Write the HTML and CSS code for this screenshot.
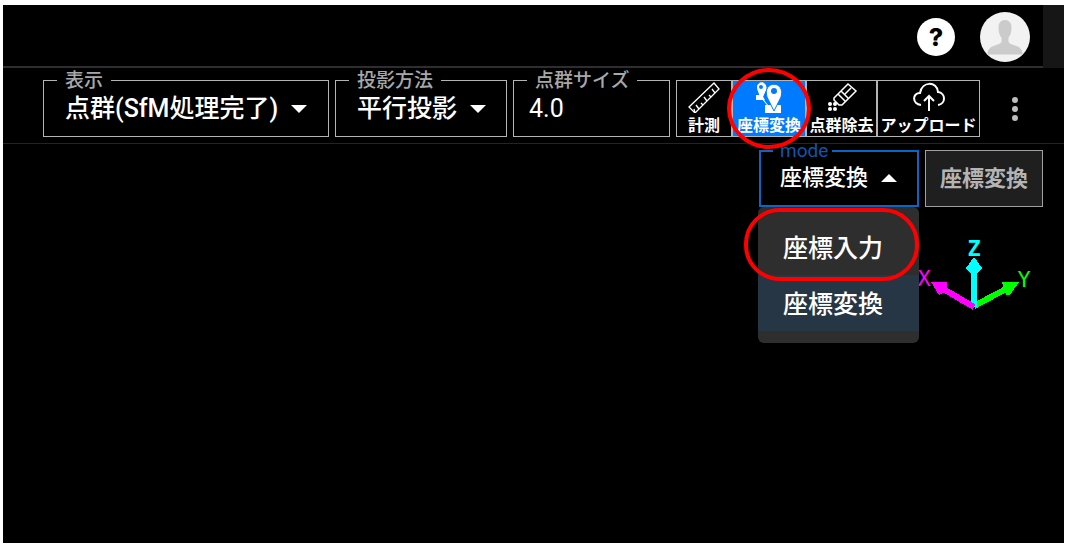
FILE: index.html
```html
<!DOCTYPE html>
<html lang="ja">
<head>
  <meta charset="UTF-8" />
  <meta name="viewport" content="width=device-width, initial-scale=1.0" />
  <title>座標変換</title>
  <link rel="stylesheet" href="styles.css">
</head>
<body>
  <div class="app">
    <header class="header">
      <button class="help" type="button">?</button>
      <button class="avatar" type="button" aria-label="アカウント">
        <svg viewBox="0 0 50 50" width="50" height="50">
          <circle cx="25" cy="25" r="25" fill="#f2f2f2" />
          <path d="M25 8c-4 0-6.500 3-6.500 7 0 6 1.500 9 3 10.500v4c0 2-4 3-8 4.500-4 1.500-6 4-6 8.500h35c0-4.500-2-7-6-8.500-4-1.500-8-2.500-8-4.500v-4c1.500-1.500 3-4.500 3-10.500 0-4-2.500-7-6.500-7z" fill="#cbcbcb" />
        </svg>
      </button>
    </header>

    <div class="toolbar">
      <fieldset class="field field-display">
        <legend><label for="display">表示</label></legend>
        <select id="display">
          <option>点群(SfM処理完了)</option>
        </select>
        <svg class="arrow" viewBox="0 0 16 8" width="16" height="8"><path d="M0 0h16L8 8z" /></svg>
      </fieldset>
      <fieldset class="field field-projection">
        <legend><label for="projection">投影方法</label></legend>
        <select id="projection">
          <option>平行投影</option>
        </select>
        <svg class="arrow" viewBox="0 0 16 8" width="16" height="8"><path d="M0 0h16L8 8z" /></svg>
      </fieldset>
      <fieldset class="field field-size">
        <legend><label for="size">点群サイズ</label></legend>
        <input id="size" type="text" value="4.0">
      </fieldset>

      <div class="tools">
        <button class="tool tool-measure" type="button">
          <svg viewBox="0 0 32 32" width="32" height="32" fill="none" stroke="#fff" stroke-width="1.300">
            <path d="M1 26L26 2l5 6L7 32z" />
            <path d="M7 32l-1-4M11 28l-3-4M15 24l-2-2M19 20l-3-4M23 16l-2-2M27 12l-3-4" />
          </svg>
          計測
        </button>
        <button class="tool tool-convert active" type="button">
          <svg viewBox="0 0 32 32" width="32" height="32">
            <path d="M3 14h6l3 5H3zM12 24h16v8H12z" fill="#fff" />
            <path d="M8 17L5 9c-3-9 9-10 8-1L9 17l7 9" fill="#fff" stroke="#fff" stroke-width="1" />
            <path d="M21 30l-7-14c-5-17 19-17 14 0z" fill="#fff" stroke="#007bff" stroke-width="1" />
            <circle cx="8" cy="6" r="2" fill="#007bff" />
            <circle cx="21" cy="10" r="3" fill="#007bff" />
          </svg>
          座標変換
        </button>
        <button class="tool tool-remove" type="button">
          <svg viewBox="0 0 32 32" width="32" height="32" fill="none" stroke="#fff" stroke-width="1.500">
            <path d="M8 17L22 3l8 7-14 14h-3l-5-5zM12 13l7 7M15 10l7 7M19 13l6-6" />
            <g fill="#fff" stroke="none">
              <circle cx="4" cy="23" r="2" /><circle cx="9" cy="23" r="2" />
              <circle cx="4" cy="28" r="2" /><circle cx="9" cy="28" r="2" />
            </g>
          </svg>
          点群除去
        </button>
        <button class="tool tool-upload" type="button">
          <svg viewBox="0 0 32 32" width="32" height="32" fill="none" stroke="#fff" stroke-width="2">
            <path d="M8 24C-1 23-1 12 7 12 9 0 24 0 25 11c8 1 8 12 0 13" />
            <path d="M16 30V15M11 20l5-5 5 5" />
          </svg>
          アップロード
        </button>
      </div>

      <button class="more" type="button" aria-label="メニュー">
        <svg viewBox="0 0 6 26" width="6" height="26" fill="#bdbdbd">
          <circle cx="3" cy="4" r="3" /><circle cx="3" cy="13" r="3" /><circle cx="3" cy="22" r="3" />
        </svg>
      </button>
    </div>

    <main class="viewer">
      <div class="mode-bar">
        <div class="mode">
          <fieldset class="field field-mode">
            <legend><label for="mode">mode</label></legend>
            <select id="mode">
              <option>座標入力</option>
              <option selected>座標変換</option>
            </select>
            <svg class="arrow" viewBox="0 0 16 8" width="16" height="8"><path d="M0 8h16L8 0z" /></svg>
          </fieldset>
          <div class="menu">
            <button class="menu-item marked" type="button">座標入力</button>
            <button class="menu-item selected" type="button">座標変換</button>
          </div>
        </div>
        <button class="convert" type="button" disabled>座標変換</button>
      </div>

      <svg class="axes" viewBox="-4 -10 122 84" width="122" height="84" fill="none" stroke-width="6" shape-rendering="crispEdges">
        <path d="M56 68L88 51" stroke="#0f0" />
        <path d="M84 44h17l-9 13h-4z" fill="#0f0" />
        <path d="M56 69V24" stroke="#0ff" />
        <path d="M56 19l8 11-4 5h-8l-4-5z" fill="#0ff" />
        <path d="M56 69L22 49" stroke="#f0f" />
        <path d="M13 44h16l-1 10-7 3z" fill="#f0f" />
        <text class="axis-label" x="6" y="48" fill="#f0f">X</text>
        <text class="axis-label" x="106" y="49" fill="#0f0">Y</text>
        <text class="axis-label axis-up" x="56" y="18" fill="#0ff">Z</text>
      </svg>
    </main>
  </div>
</body>
</html>
```

FILE: styles.css
```css
* {
  box-sizing: border-box;
}
body {
  margin: 0;
  padding: 5px 1px 5px 3px;
  min-height: 100vh;
  display: flex;
  background: #fff;
  color: #fff;
  font-family: Roboto, "Noto Sans CJK JP", sans-serif;
}
button, select, input {
  font-family: inherit;
  color: inherit;
  margin: 0;
  padding: 0;
  border: none;
  background: none;
}
svg {
  flex: none;
}
.app {
  flex: 1;
  min-width: 0;
  background: #000;
}

/* header */
.header {
  display: flex;
  justify-content: flex-end;
  align-items: center;
  gap: 25px;
  height: 63px;
  padding-right: 13px;
  border-right: 21px solid #161616;
  box-shadow: inset 0 -2px #2e2e31;
}
.help {
  width: 38px;
  height: 38px;
  border-radius: 50%;
  background: #fff;
  color: #000;
  font-family: Inter, sans-serif;
  font-size: 25px;
  font-weight: 800;
  line-height: 38px;
}
.avatar {
  display: flex;
}

/* toolbar */
.toolbar {
  display: flex;
  align-items: flex-end;
  gap: 6px;
  padding: 1px 20px 6px 40px;
  border-bottom: 1px solid #222426;
}
.field {
  display: flex;
  align-items: center;
  min-width: 0;
  margin: 0;
  padding: 0 0 10px 13px;
  border: 1px solid #b4b4b4;
}
.field legend {
  padding: 0 8px;
  color: #a8a8a8;
  font-size: 19px;
  font-weight: 500;
  line-height: 23px;
  white-space: nowrap;
}
.field label {
  display: block;
}
.field select,
.field input {
  appearance: none;
  height: 34px;
  font-size: 25px;
  line-height: 34px;
  font-weight: 500;
  outline: none;
}
.field select {
  padding-left: 8px;
}
.field input {
  width: 100%;
  padding-left: 2px;
  font-weight: 400;
}
.arrow {
  margin-left: 12px;
  fill: #fff;
}
.field-display {
  flex: 286 1 286px;
}
.field-projection {
  flex: 172 1 172px;
}
.field-size {
  flex: 157 1 157px;
}
.tools {
  display: flex;
  height: 57px;
}
.tool {
  position: relative;
  display: flex;
  flex-direction: column;
  align-items: center;
  border: 1px solid #b4b4b4;
  font-size: 16px;
  font-weight: 700;
  line-height: 26px;
  white-space: nowrap;
}
.tool-measure {
  width: 56px;
}
.tool-convert {
  width: 74px;
}
.tool-remove {
  width: 71px;
}
.tool-upload {
  width: 103px;
}
.tool.active {
  background: #007bff;
}
/* highlight ring */
.tool.active::after {
  content: "";
  position: absolute;
  z-index: 3;
  inset: -13px -6px;
  border: 4px solid #f00;
  border-radius: 50%;
}
.more {
  display: flex;
  align-items: center;
  justify-content: center;
  width: 58px;
  height: 57px;
}

/* viewer */
.viewer {
  display: flex;
  flex-direction: column;
  align-items: flex-end;
  gap: 21px;
}
.mode-bar {
  display: flex;
  align-items: flex-end;
  gap: 6px;
  padding-right: 21px;
}
.mode {
  position: relative;
  width: 160px;
}
.field-mode {
  padding: 0 0 7px 12px;
  border: 2px solid #0a66c2;
}
.field-mode legend {
  padding: 0 4px 0 7px;
  color: #0d56ad;
  font-weight: 400;
  line-height: 14px;
}
.field-mode select {
  height: 40px;
  padding-left: 7px;
  font-size: 22px;
}
.menu {
  position: absolute;
  z-index: 2;
  top: 100%;
  left: -1px;
  right: 0;
  padding: 12px 0;
  border-radius: 6px;
  background: #2e2e2e;
}
.menu-item {
  position: relative;
  display: block;
  width: 100%;
  height: 56px;
  padding: 0 0 2px 25px;
  font-size: 25px;
  font-weight: 500;
  text-align: left;
}
.menu-item.selected {
  background: #273645;
}
.menu-item.marked::after {
  content: "";
  position: absolute;
  z-index: 1;
  inset: -11px 0 -6px -14px;
  border: 4px solid #f00;
  border-radius: 36px;
}
.convert {
  width: 118px;
  height: 57px;
  padding-bottom: 6px;
  border: 1px solid #a0a0a0;
  background: #1f1f1f;
  color: #b4b4b4;
  font-size: 22px;
  font-weight: 700;
}
.axes {
  margin-right: 28px;
}
.axis-label {
  font-family: "DejaVu Sans Mono", monospace;
  font-size: 22px;
  text-anchor: middle;
  stroke: none;
}
.axis-up {
  font-weight: 700;
}
```
